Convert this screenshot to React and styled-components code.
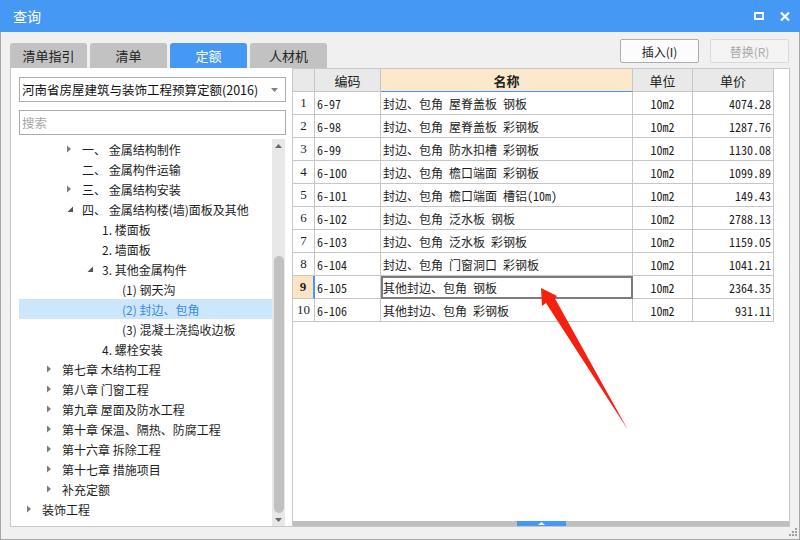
import React from "react";
import styled, { createGlobalStyle } from "styled-components";

const Global = createGlobalStyle`
  html, body { margin: 0; padding: 0; background: #ffffff; }
  #root { width: 800px; height: 540px; }
`;

const UI_FONT = `"Noto Sans CJK SC", "Noto Sans", sans-serif`;
const CELL_FONT = `"Noto Sans Mono CJK SC", "DejaVu Sans Mono", "Noto Sans CJK SC", monospace`;
const BLUE = "#4599f4";
const GRID = "#c6c6c6";

const Window = styled.div`
  position: relative;
  width: 800px;
  height: 540px;
  display: flex;
  flex-direction: column;
  background: #f0f0f0;
  font-family: ${UI_FONT};
  font-size: 12px;
  color: #1e1e1e;
  overflow: hidden;
`;

const TitleBar = styled.div`
  flex: none;
  height: 32px;
  background: ${BLUE};
  display: flex;
  align-items: center;
  padding: 0 10px 0 13px;
  color: #fff;
  font-size: 14px;
`;

const TitleText = styled.span`
  flex: 1;
`;

const TitleIcons = styled.div`
  display: flex;
  align-items: center;
  gap: 16px;
`;

const Body = styled.div`
  flex: 1;
  display: flex;
  flex-direction: column;
  border: 1px solid #a6a6a6;
  border-top: none;
  padding: 0 9px 12px 9px;
  min-height: 0;
`;

const HeaderRow = styled.div`
  flex: none;
  height: 36px;
  display: flex;
`;

const Tabs = styled.div`
  display: flex;
  gap: 3px;
  align-self: flex-end;
`;

const Tab = styled.div`
  width: 77px;
  height: 25px;
  display: flex;
  align-items: center;
  justify-content: center;
  border-radius: 3px 3px 0 0;
  font-size: 13px;
  background: ${(p) => (p.$active ? BLUE : "#c2c2c2")};
  color: ${(p) => (p.$active ? "#fff" : "#222")};
`;

const Buttons = styled.div`
  margin-left: auto;
  margin-top: 7px;
  margin-right: 1px;
  display: flex;
  gap: 11px;
  align-items: flex-start;
`;

const Button = styled.div`
  width: 79px;
  height: 24px;
  box-sizing: border-box;
  display: flex;
  align-items: center;
  justify-content: center;
  border-radius: 2px;
  font-size: 12px;
  border: 1px solid ${(p) => (p.$disabled ? "#d9d9d9" : "#adadad")};
  background: ${(p) => (p.$disabled ? "#f4f4f4" : "#fcfcfc")};
  color: ${(p) => (p.$disabled ? "#a9a9a9" : "#222")};
`;

const Main = styled.div`
  flex: 1;
  display: flex;
  min-height: 0;
`;

const LeftPanel = styled.div`
  width: 282px;
  flex: none;
  box-sizing: border-box;
  background: #fff;
  border-left: 1px solid #c8c8c8;
  border-bottom: 1px solid #c8c8c8;
  padding: 9px 6px 0 8px;
  display: flex;
  flex-direction: column;
  min-height: 0;
`;

const Field = styled.div`
  flex: none;
  height: 25px;
  box-sizing: border-box;
  border: 1px solid #ababab;
  display: flex;
  align-items: center;
  padding: 0 7px 0 2px;
  font-size: 12.5px;
  color: ${(p) => (p.$placeholder ? "#a8a8a8" : "#111")};
  margin-top: ${(p) => p.$mt || 0}px;
`;

const FieldText = styled.span`
  flex: 1;
  white-space: nowrap;
`;

const TreeArea = styled.div`
  flex: 1;
  margin-top: 4px;
  display: flex;
  min-height: 0;
  width: 266px;
`;

const TreeList = styled.div`
  width: 253px;
  flex: none;
  overflow: hidden;
`;

const TreeRow = styled.div`
  height: 20px;
  display: flex;
  align-items: center;
  padding-left: ${(p) => 8 + p.$level * 20}px;
  background: ${(p) => (p.$sel ? "#cce6fc" : "transparent")};
  color: ${(p) => (p.$sel ? "#3a8ae6" : "#1e1e1e")};
  white-space: pre;
  font-size: 12px;
`;

const Toggle = styled.span`
  width: 15px;
  height: 20px;
  flex: none;
  display: flex;
  align-items: center;
`;

const Scrollbar = styled.div`
  width: 13px;
  flex: none;
  background: #e8e8e8;
  display: flex;
  flex-direction: column;
  align-items: center;
`;

const ScrollArrow = styled.div`
  flex: none;
  height: ${(p) => p.$h}px;
  display: flex;
  align-items: center;
  justify-content: center;
`;

const ThumbArea = styled.div`
  flex: 1;
  padding-top: 103px;
`;

const Thumb = styled.div`
  width: 10px;
  height: 257px;
  border-radius: 5px;
  background: #c1c1c1;
`;

const RightPanel = styled.div`
  flex: 1;
  box-sizing: border-box;
  background: #fff;
  border: 1px solid #c8c8c8;
  display: flex;
  flex-direction: column;
  min-width: 0;
`;

const Table = styled.div`
  flex: 1;
  font-family: ${CELL_FONT};
  font-size: 12px;
`;

const Row = styled.div`
  display: grid;
  grid-template-columns: 22px 66px 252px 60px 81px;
  height: 23px;
`;

const Cell = styled.div`
  box-sizing: border-box;
  border-right: 1px solid ${GRID};
  border-bottom: 1px solid ${GRID};
  display: flex;
  align-items: center;
  padding: 0 2px;
  white-space: pre;
  overflow: hidden;
  justify-content: ${(p) =>
    p.$align === "center" ? "center" : p.$align === "right" ? "flex-end" : "flex-start"};
`;

const HeadCell = styled(Cell)`
  font-family: ${UI_FONT};
  font-size: 13px;
  color: #222;
  justify-content: center;
  background: ${(p) => (p.$hl ? "#fde8cc" : "#e9e9e9")};
  border-bottom-color: ${(p) => (p.$hl ? "#4599f4" : GRID)};
  font-weight: ${(p) => (p.$hl ? 700 : 400)};
`;

const NumCell = styled(Cell)`
  justify-content: center;
  padding: 0;
  background: ${(p) => (p.$cur ? "#fde4c4" : "#fff")};
  font-weight: ${(p) => (p.$cur ? 700 : 400)};
  border-right: ${(p) => (p.$cur ? `2px solid ${BLUE}` : `1px solid ${GRID}`)};
  font-family: "Liberation Serif", "DejaVu Serif", serif;
  font-size: 13px;
`;

const NameCell = styled(Cell)`
  outline: ${(p) => (p.$cur ? "2px solid #7b7b7b" : "none")};
  outline-offset: -2px;
`;

const Splitter = styled.div`
  flex: none;
  height: 5px;
  background: #bfbfbf;
  display: flex;
  justify-content: center;
`;

const SplitHandle = styled.div`
  width: 49px;
  height: 5px;
  background: ${BLUE};
  display: flex;
  align-items: center;
  justify-content: center;
`;

const Overlay = styled.svg`
  position: absolute;
  left: 0;
  top: 0;
  pointer-events: none;
`;

const Grip = styled.svg`
  position: absolute;
  right: 2px;
  bottom: 3px;
`;

const rows = [
  ["6-97", "封边、包角 屋脊盖板 钢板", "4074.28"],
  ["6-98", "封边、包角 屋脊盖板 彩钢板", "1287.76"],
  ["6-99", "封边、包角 防水扣槽 彩钢板", "1130.08"],
  ["6-100", "封边、包角 檐口端面 彩钢板", "1099.89"],
  ["6-101", "封边、包角 檐口端面 槽铝(10m)", "149.43"],
  ["6-102", "封边、包角 泛水板 钢板", "2788.13"],
  ["6-103", "封边、包角 泛水板 彩钢板", "1159.05"],
  ["6-104", "封边、包角 门窗洞口 彩钢板", "1041.21"],
  ["6-105", "其他封边、包角 钢板", "2364.35"],
  ["6-106", "其他封边、包角 彩钢板", "931.11"],
];

const tree = [
  { level: 2, exp: "c", text: "一、 金属结构制作" },
  { level: 2, text: "二、 金属构件运输" },
  { level: 2, exp: "c", text: "三、 金属结构安装" },
  { level: 2, exp: "o", text: "四、 金属结构楼(墙)面板及其他" },
  { level: 3, text: "1. 楼面板" },
  { level: 3, text: "2. 墙面板" },
  { level: 3, exp: "o", text: "3. 其他金属构件" },
  { level: 4, text: "(1) 钢天沟" },
  { level: 4, text: "(2) 封边、包角", sel: true },
  { level: 4, text: "(3) 混凝土浇捣收边板" },
  { level: 3, text: "4. 螺栓安装" },
  { level: 1, exp: "c", text: "第七章 木结构工程" },
  { level: 1, exp: "c", text: "第八章 门窗工程" },
  { level: 1, exp: "c", text: "第九章 屋面及防水工程" },
  { level: 1, exp: "c", text: "第十章 保温、隔热、防腐工程" },
  { level: 1, exp: "c", text: "第十六章 拆除工程" },
  { level: 1, exp: "c", text: "第十七章 措施项目" },
  { level: 1, exp: "c", text: "补充定额" },
  { level: 0, exp: "c", text: "装饰工程" },
];

function ToggleIcon({ exp }) {
  if (exp === "c")
    return (
      <svg width="6" height="8" viewBox="0 0 6 8">
        <polygon points="0,0.5 4,4 0,7.5" fill="#7c7c7c" />
      </svg>
    );
  if (exp === "o")
    return (
      <svg width="7" height="7" viewBox="0 0 7 7">
        <polygon points="6,0.5 6,6 0.5,6" fill="#555" />
      </svg>
    );
  return null;
}

export default function App() {
  return (
    <>
      <Global />
      <Window>
        <TitleBar>
          <TitleText>查询</TitleText>
          <TitleIcons>
            <svg width="10" height="8" viewBox="0 0 10 8">
              <rect x="1" y="1" width="8" height="6" fill="none" stroke="#fff" strokeWidth="2" />
            </svg>
            <svg width="10" height="9" viewBox="0 0 10 9">
              <path d="M1 0.5 L9 8.5 M9 0.5 L1 8.5" stroke="#fff" strokeWidth="2.2" />
            </svg>
          </TitleIcons>
        </TitleBar>
        <Body>
          <HeaderRow>
            <Tabs>
              <Tab>清单指引</Tab>
              <Tab>清单</Tab>
              <Tab $active>定额</Tab>
              <Tab>人材机</Tab>
            </Tabs>
            <Buttons>
              <Button>插入(I)</Button>
              <Button $disabled>替换(R)</Button>
            </Buttons>
          </HeaderRow>
          <Main>
            <LeftPanel>
              <Field>
                <FieldText>河南省房屋建筑与装饰工程预算定额(2016)</FieldText>
                <svg width="7" height="4" viewBox="0 0 7 4">
                  <polygon points="0,0 7,0 3.5,4" fill="#808080" />
                </svg>
              </Field>
              <Field $placeholder $mt={8}>
                <FieldText>搜索</FieldText>
              </Field>
              <TreeArea>
                <TreeList>
                  {tree.map((t, i) => (
                    <TreeRow key={i} $level={t.level} $sel={t.sel}>
                      <Toggle>
                        <ToggleIcon exp={t.exp} />
                      </Toggle>
                      {t.text}
                    </TreeRow>
                  ))}
                </TreeList>
                <Scrollbar>
                  <ScrollArrow $h={14}>
                    <svg width="7" height="4" viewBox="0 0 7 4">
                      <polygon points="0,4 7,4 3.5,0" fill="#6a6a6a" />
                    </svg>
                  </ScrollArrow>
                  <ThumbArea>
                    <Thumb />
                  </ThumbArea>
                  <ScrollArrow $h={12}>
                    <svg width="7" height="4" viewBox="0 0 7 4">
                      <polygon points="0,0 7,0 3.5,4" fill="#6a6a6a" />
                    </svg>
                  </ScrollArrow>
                </Scrollbar>
              </TreeArea>
            </LeftPanel>
            <RightPanel>
              <Table>
                <Row>
                  <HeadCell />
                  <HeadCell>编码</HeadCell>
                  <HeadCell $hl>名称</HeadCell>
                  <HeadCell>单位</HeadCell>
                  <HeadCell>单价</HeadCell>
                </Row>
                {rows.map((r, i) => {
                  const cur = i === 8;
                  return (
                    <Row key={i}>
                      <NumCell $cur={cur}>{i + 1}</NumCell>
                      <Cell>{r[0]}</Cell>
                      <NameCell $cur={cur}>{r[1]}</NameCell>
                      <Cell $align="center">10m2</Cell>
                      <Cell $align="right">{r[2]}</Cell>
                    </Row>
                  );
                })}
              </Table>
              <Splitter>
                <SplitHandle>
                  <svg width="7" height="3" viewBox="0 0 7 3">
                    <polygon points="0,3 7,3 3.5,0" fill="#fff" />
                  </svg>
                </SplitHandle>
              </Splitter>
            </RightPanel>
          </Main>
        </Body>
        <Overlay width="800" height="540" viewBox="0 0 800 540">
          <polygon
            points="541,288 557,296 555,298.5 628,430 546,303 542,306"
            fill="#f5200f"
          />
        </Overlay>
        <Grip width="10" height="10" viewBox="0 0 10 10">
          <rect x="7" y="1" width="2" height="2" fill="#a0a0a0" />
          <rect x="4" y="4" width="2" height="2" fill="#a0a0a0" />
          <rect x="7" y="4" width="2" height="2" fill="#a0a0a0" />
          <rect x="1" y="7" width="2" height="2" fill="#a0a0a0" />
          <rect x="4" y="7" width="2" height="2" fill="#a0a0a0" />
          <rect x="7" y="7" width="2" height="2" fill="#a0a0a0" />
        </Grip>
      </Window>
    </>
  );
}
